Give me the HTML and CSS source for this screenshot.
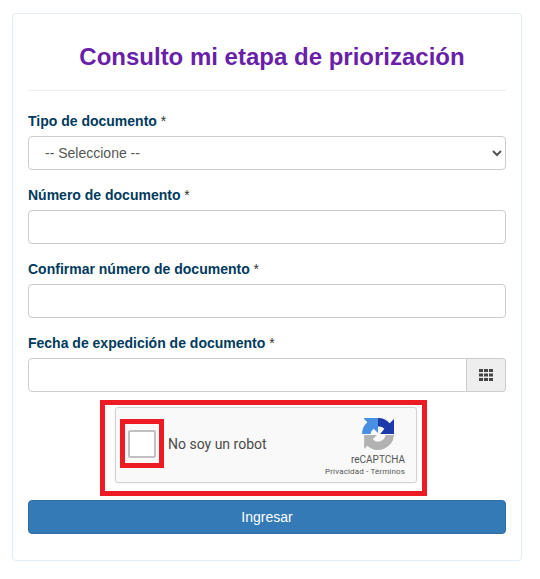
FILE: index.html
```html
<!DOCTYPE html>
<html lang="en">
<head>
    <meta charset="UTF-8">
    <meta name="viewport" content="width=device-width, initial-scale=1.0">
    <title>Consulto mi etapa de priorización</title>
    <link rel="stylesheet" href="styles.css">
</head>
<body>
    <div class="container">
        <h1>Consulto mi etapa de priorización</h1>
        <hr>
        <div class="field field-first">
            <label for="tipo">Tipo de documento <span class="req">*</span></label>
            <select id="tipo" class="control">
                <option>-- Seleccione --</option>
            </select>
        </div>
        <div class="field">
            <label for="numero">Número de documento <span class="req">*</span></label>
            <input type="text" id="numero" class="control">
        </div>
        <div class="field">
            <label for="confirmar">Confirmar número de documento <span class="req">*</span></label>
            <input type="text" id="confirmar" class="control">
        </div>
        <div class="field">
            <label for="fecha">Fecha de expedición de documento <span class="req">*</span></label>
            <div class="input-group">
                <input type="text" id="fecha" class="control">
                <span class="addon">
                    <svg width="14" height="14" viewBox="0 0 14 14" fill="#444">
                        <rect x="0" y="1" width="4" height="3"/>
                        <rect x="5" y="1" width="4" height="3"/>
                        <rect x="10" y="1" width="4" height="3"/>
                        <rect x="0" y="5.500" width="4" height="3"/>
                        <rect x="5" y="5.500" width="4" height="3"/>
                        <rect x="10" y="5.500" width="4" height="3"/>
                        <rect x="0" y="10" width="4" height="3"/>
                        <rect x="5" y="10" width="4" height="3"/>
                        <rect x="10" y="10" width="4" height="3"/>
                    </svg>
                </span>
            </div>
        </div>
        <div class="captcha-mark">
            <div class="captcha">
                <div class="check-mark">
                    <div class="check"></div>
                </div>
                <span class="captcha-text">No soy un robot</span>
                <div class="captcha-brand">
                    <svg class="captcha-logo" width="32" height="32" viewBox="0 0 30 30">
                        <path fill="#b2b2b2" d="M30 16A15 15 0 0 1 5 26L2 29V16H14L10 20A7 7 0 0 0 22 16z"/>
                        <path fill="#4a90e2" d="M15 0V14L11 10A7 7 0 0 0 8 15H0A15 15 0 0 1 5 4L2 1V0z"/>
                        <path fill="#1c3aa9" d="M15 0A15 15 0 0 1 26 5L30 1V15H17L21 10A7 7 0 0 0 15 8z"/>
                    </svg>
                    <span class="brand-name">reCAPTCHA</span>
                    <span class="brand-links">Privacidad - Términos</span>
                </div>
            </div>
        </div>
        <button type="button">Ingresar</button>
    </div>
</body>
</html>
```

FILE: styles.css
```css
body {
    font-family: "Liberation Sans", Arial, sans-serif;
    font-size: 14px;
    margin: 0;
    padding: 13px 0 0 12px;
    background-color: #fff;
    color: #333;
}

.container {
    width: 510px;
    height: 548px;
    box-sizing: border-box;
    padding: 27px 15px 0 15px;
    background-color: #fff;
    border: 1px solid #e2ebf7;
    border-radius: 4px;
}

h1 {
    margin: 0;
    padding-left: 10px;
    text-align: center;
    font-size: 24px;
    line-height: 32px;
    font-weight: bold;
    color: #6a1fa9;
}

hr {
    margin: 17px 0 0;
    border: none;
    border-top: 1px solid #eee;
}

.field {
    margin-top: 15px;
}

.field-first {
    margin-top: 20px;
}

label {
    display: block;
    height: 20px;
    margin-bottom: 5px;
    font-weight: bold;
    line-height: 20px;
    color: #003a5d;
}

.req {
    font-weight: normal;
    color: #333;
}

.control {
    display: block;
    width: 100%;
    height: 34px;
    padding: 6px 12px;
    box-sizing: border-box;
    font-family: inherit;
    font-size: 14px;
    color: #555;
    background-color: #fff;
    border: 1px solid #ccc;
    border-radius: 4px;
}

.input-group {
    display: flex;
}

.input-group .control {
    flex: 1;
    border-radius: 4px 0 0 4px;
}

.addon {
    display: flex;
    align-items: center;
    justify-content: center;
    width: 39px;
    box-sizing: border-box;
    background-color: #eee;
    border: 1px solid #ccc;
    border-left: none;
    border-radius: 0 4px 4px 0;
}

.captcha-mark {
    width: 327px;
    height: 96px;
    box-sizing: border-box;
    margin: 8px 0 0 72px;
    padding: 2px 0 0 10px;
    border: 5px solid #ed1c24;
}

.captcha {
    display: flex;
    align-items: center;
    width: 302px;
    height: 76px;
    box-sizing: border-box;
    padding: 0 11px 3px 4px;
    font-family: Roboto, "Liberation Sans", sans-serif;
    background-color: #f9f9f9;
    border: 1px solid #d3d3d3;
    border-radius: 3px;
    box-shadow: 0 0 3px rgba(0, 0, 0, 0.08);
}

.check-mark {
    display: flex;
    align-items: center;
    justify-content: center;
    width: 44px;
    height: 49px;
    box-sizing: border-box;
    border: 5px solid #ed1c24;
}

.check {
    width: 28px;
    height: 28px;
    box-sizing: border-box;
    background-color: #fff;
    border: 2px solid #c1c1c1;
    border-radius: 2px;
}

.captcha-text {
    flex: 1;
    margin-left: 4px;
    font-size: 14px;
    color: #4a4a4a;
}

.captcha-brand {
    display: flex;
    flex-direction: column;
    align-items: flex-end;
    align-self: flex-start;
    padding-top: 10px;
    color: #555;
}

.captcha-logo {
    margin: 0 11px 3px 0;
}

.brand-name {
    font-size: 10px;
    line-height: 14px;
}

.brand-links {
    font-size: 8px;
    line-height: 10px;
    letter-spacing: 0.15px;
}

button {
    display: block;
    width: 100%;
    height: 34px;
    margin-top: 4px;
    font-family: inherit;
    font-size: 14px;
    color: #fff;
    background-color: #337ab7;
    border: 1px solid #2e6da4;
    border-radius: 4px;
}
```
